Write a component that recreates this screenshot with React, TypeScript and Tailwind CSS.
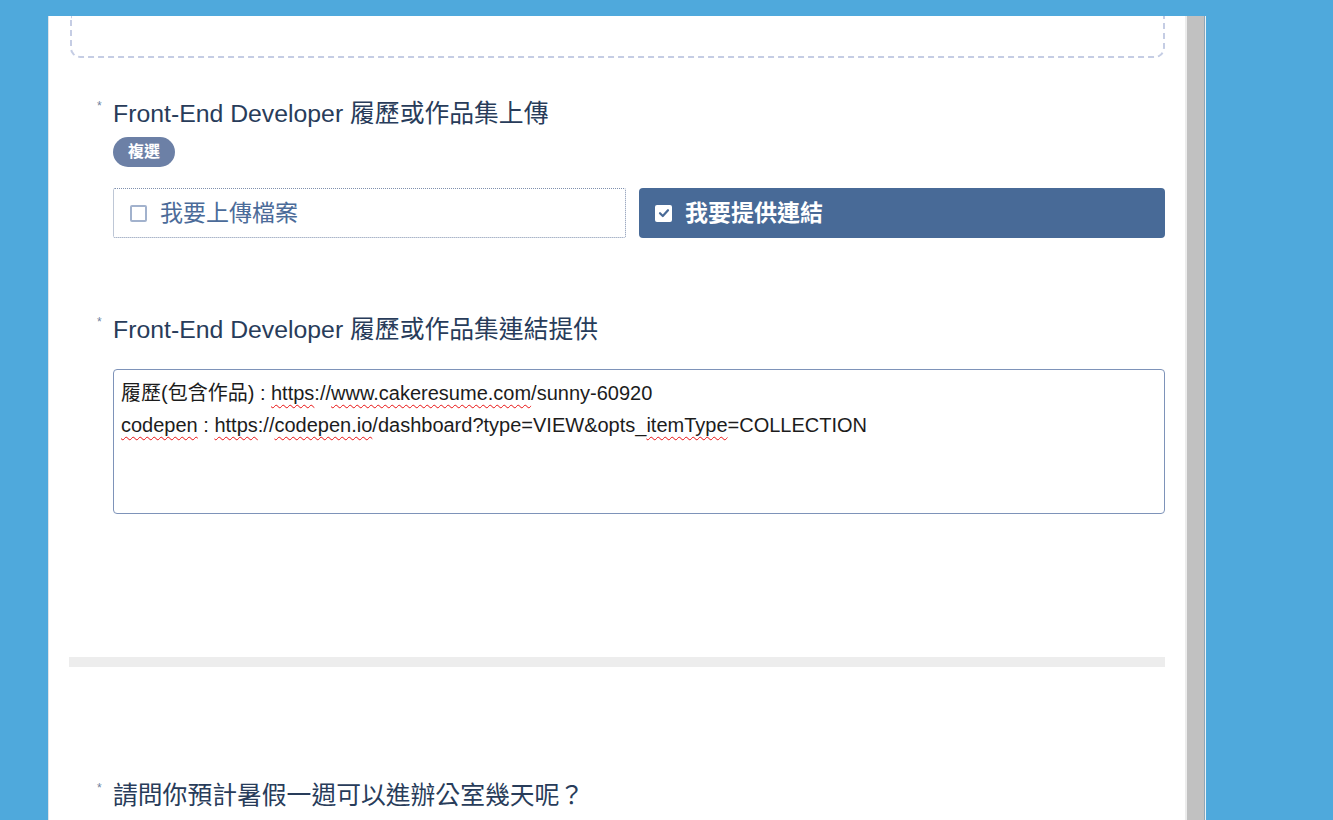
import React from "react";

const sans = { fontFamily: '"Liberation Sans", "Noto Sans CJK TC", Arial, sans-serif' };

function Wavy({ children }: { children: React.ReactNode }) {
  return (
    <span className="underline decoration-wavy decoration-[#e81010] decoration-1 underline-offset-[4px]">
      {children}
    </span>
  );
}

function Question({ text }: { text: string }) {
  return (
    <div className="flex pl-[28px]">
      <span className="w-[16px] shrink-0 text-[12px] leading-[16px] text-[#6f7f9e]">*</span>
      <span className="text-[24.8px] leading-[32px] text-[#283c5a] whitespace-nowrap">{text}</span>
    </div>
  );
}

export default function App() {
  return (
    <div className="flex h-[820px] w-full overflow-hidden bg-[#4fa9dc]" style={sans}>
      <div className="w-[48px] shrink-0" />
      <div className="mt-4 flex h-[804px] w-[1158px] shrink-0 border-l border-[#dfe3e8] bg-white">
        <main className="flex flex-1 flex-col pl-[20px] pr-[20px]">
          <div className="ml-[1px] h-[42px] rounded-b-[10px] border-2 border-t-0 border-dashed border-[#c5cde4]" />

          <div className="mt-[40px]">
            <Question text="Front-End Developer 履歷或作品集上傳" />
          </div>
          <div className="mt-[7px] ml-[44px] flex h-[30px] w-[62px] items-center justify-center rounded-full bg-[#6c80a6] text-[16px] font-bold text-white">
            複選
          </div>

          <div className="mt-[21px] ml-[44px] flex gap-[13px]">
            <div className="flex h-[50px] w-[513px] items-center gap-[13px] rounded-[2px] border border-dotted border-[#7f90ae] pl-[16px]">
              <span className="h-[17px] w-[17px] rounded-[2px] border-2 border-[#a2b2cd]" />
              <span className="text-[23px] text-[#4b6b99]">我要上傳檔案</span>
            </div>
            <div className="flex h-[50px] flex-1 items-center gap-[13px] rounded-[4px] bg-[#486a97] pl-[16px]">
              <span className="flex h-[17px] w-[17px] items-center justify-center rounded-[2px] bg-white">
                <svg width="12" height="12" viewBox="0 0 12 12" fill="none">
                  <path d="M2 6.2 L4.8 9 L10 3.2" stroke="#486a97" strokeWidth="2.2" strokeLinecap="round" strokeLinejoin="round" />
                </svg>
              </span>
              <span className="text-[23px] font-bold text-white">我要提供連結</span>
            </div>
          </div>

          <div className="mt-[76px]">
            <Question text="Front-End Developer 履歷或作品集連結提供" />
          </div>

          <div className="mt-[23px] ml-[44px] h-[145px] rounded-[4px] border border-[#7e93b9] px-[7px] pt-[7px] text-[20px] leading-[32px] text-[#1c1c1c] whitespace-pre">
            <div>
              履歷(包含作品) : <Wavy>https</Wavy>://<Wavy>www.cakeresume.com</Wavy>/sunny-60920
            </div>
            <div>
              <Wavy>codepen</Wavy> : <Wavy>https</Wavy>://<Wavy>codepen.io</Wavy>/dashboard?type=VIEW&amp;opts_<Wavy>itemType</Wavy>=COLLECTION
            </div>
          </div>

          <div className="mt-[143px] h-[10px] bg-[#ededed]" />

          <div className="mt-[113px]">
            <Question text="請問你預計暑假一週可以進辦公室幾天呢？" />
          </div>
        </main>
        <div className="w-[2px] shrink-0 bg-[#ececec]" />
        <div className="w-[17px] shrink-0 bg-[#c1c1c1]" />
        <div className="w-[1px] shrink-0 bg-[#8ea7b8]" />
        <div className="w-[1px] shrink-0 bg-[#eef2f4]" />
      </div>
    </div>
  );
}
